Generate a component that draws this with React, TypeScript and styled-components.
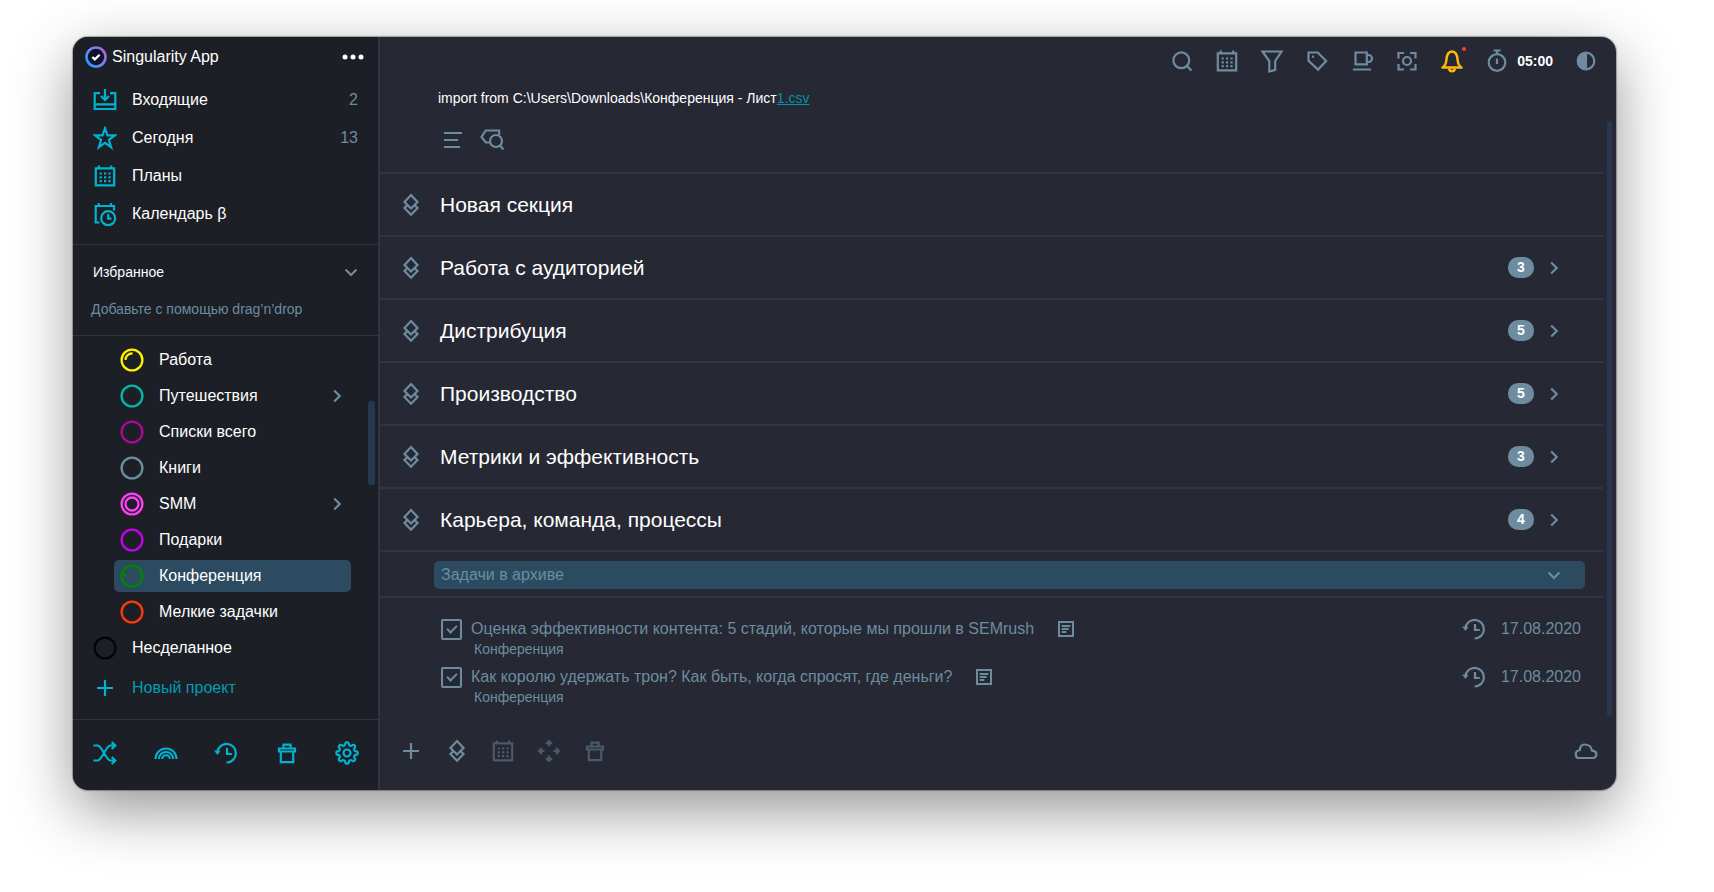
import React, { useState } from 'react';
import styled, { createGlobalStyle, css } from 'styled-components';

const GlobalStyle = createGlobalStyle`
  *, *::before, *::after { box-sizing: border-box; }
  html, body, #root { height: 100%; }
  body {
    margin: 0;
    background: #fff;
    color: #fff;
    font: 16px/20px "Liberation Sans", Arial, sans-serif;
  }
  button { font: inherit; color: inherit; background: none; border: 0; padding: 0; cursor: pointer; text-align: left; }
  ul, h1, h2, p { margin: 0; padding: 0; list-style: none; font-weight: 400; }
  a { color: inherit; }
  svg { flex: none; }
`;

const color = {
  side: '#1c1f26',
  main: '#262833',
  line: '#323541',
  accent: '#00b4d0',
  muted: '#6d8ca0',
  active: '#2c4a60',
  scroll: '#273750',
};

const Desktop = styled.div`
  min-height: 100%;
  display: flex;
  padding: 37px 98px 102px 73px;
`;

const Window = styled.div`
  flex: 1;
  min-width: 0;
  display: flex;
  border-radius: 15px;
  overflow: hidden;
  background: ${color.main};
  box-shadow: 0 0 1px 1px rgba(0, 0, 0, 0.3), 0 20px 60px rgba(0, 0, 0, 0.42);
`;

const Sidebar = styled.aside`
  width: 307px;
  flex: none;
  display: flex;
  flex-direction: column;
  background: ${color.side};
  border-right: 2px solid ${color.line};
`;

const Brand = styled.header`
  display: flex;
  align-items: center;
  gap: 5px;
  height: 40px;
  padding: 0 13px 0 12px;
`;

const BrandName = styled.span`flex: 1;`;

const IconButton = styled.button<{ $tone?: string }>`
  display: flex;
  flex: none;
  align-items: center;
  justify-content: center;
  width: 24px;
  height: 24px;
  color: ${(p) => p.$tone ?? color.muted};
  &:disabled { opacity: 0.5; }
`;

const NavList = styled.ul`
  padding: 4px 0 11px;
  border-bottom: 1px solid ${color.line};
`;

const NavRow = styled.button`
  display: flex;
  align-items: center;
  gap: 15px;
  width: 100%;
  height: 38px;
  padding: 0 20px;
  svg { color: ${color.accent}; }
`;

const NavLabel = styled.span`flex: 1;`;

const NavCount = styled.span`color: ${color.muted};`;

const Favorites = styled.section`
  height: 91px;
  padding: 16px 15px 0 20px;
  font-size: 14px;
  border-bottom: 1px solid ${color.line};
`;

const FavoritesHead = styled.button`
  display: flex;
  align-items: center;
  justify-content: space-between;
  width: 100%;
  height: 22px;
  color: #fff;
  svg { color: ${color.muted}; }
`;

const Hint = styled.p`
  margin: 16px 0 0 -2px;
  color: ${color.muted};
`;

const ProjectArea = styled.div`
  flex: 1;
  min-height: 0;
  display: flex;
  border-bottom: 1px solid ${color.line};
`;

const ProjectList = styled.ul`
  flex: 1;
  padding: 8px 0 0 20px;
`;

const ProjectRow = styled.button<{ $nested?: boolean; $active?: boolean }>`
  display: flex;
  align-items: center;
  gap: 15px;
  height: 32px;
  margin: 0 0 4px;
  width: ${(p) => (p.$nested ? '237px' : '258px')};
  ${(p) => p.$nested && css`margin-left: 21px; padding: 0 2px 0 6px;`}
  border-radius: 5px;
  background: ${(p) => (p.$active ? color.active : 'transparent')};
  svg { color: ${color.muted}; }
`;

const NewProject = styled.button`
  display: flex;
  align-items: center;
  gap: 15px;
  height: 32px;
  margin-top: 8px;
  color: ${color.accent};
  span { color: #009db5; }
`;

const Thumb = styled.span`
  width: 7px;
  height: 84px;
  margin: 65px 3px 0 0;
  border-radius: 3px;
  background: ${color.scroll};
`;

const SideFooter = styled.footer`
  display: flex;
  justify-content: space-between;
  height: 70px;
  padding: 21px 19px 0 20px;
`;

const Main = styled.main`
  flex: 1;
  min-width: 0;
  display: flex;
  flex-direction: column;
`;

const Toolbar = styled.div`
  display: flex;
  justify-content: flex-end;
  align-items: center;
  gap: 21px;
  height: 48px;
  padding-right: 18px;
`;

const Timer = styled.button`
  display: flex;
  align-items: center;
  gap: 8px;
  font-size: 14px;
  font-weight: 700;
  svg { color: ${color.muted}; }
`;

const Bell = styled(IconButton)`
  position: relative;
  &::after {
    content: '';
    position: absolute;
    top: -2px;
    right: -2px;
    width: 4px;
    height: 4px;
    border-radius: 50%;
    background: #f5452c;
  }
`;

const Scroller = styled.div`
  flex: 1;
  min-height: 0;
  display: flex;
`;

const Content = styled.div`
  flex: 1;
  min-width: 0;
`;

const MainTrack = styled.span`
  width: 5px;
  margin: 36px 4px 0;
  border-radius: 2px;
  background: ${color.scroll};
`;

const ProjectHead = styled.header`
  height: 89px;
  padding: 3px 0 0 58px;
  border-bottom: 2px solid ${color.line};
`;

const ProjectTitle = styled.h1`
  font-size: 14px;
  line-height: 20px;
  a { color: #0093ab; }
`;

const ViewTools = styled.div`
  display: flex;
  gap: 15px;
  padding: 20px 0 0 3px;
`;

const SectionRow = styled.button`
  display: flex;
  align-items: center;
  width: 100%;
  height: 63px;
  padding: 0 37px 0 19px;
  border-bottom: 2px solid ${color.line};
  color: ${color.muted};
`;

const SectionTitle = styled.span`
  flex: 1;
  margin-left: 17px;
  color: #fff;
  font-size: 21px;
  line-height: 24px;
`;

const Badge = styled.span`
  width: 26px;
  height: 21px;
  margin-right: 8px;
  border-radius: 10px;
  background: ${color.muted};
  color: #fff;
  font-size: 14px;
  font-weight: 700;
  line-height: 21px;
  text-align: center;
`;

const ArchiveWrap = styled.div`
  padding: 9px 18px 7px 54px;
  border-bottom: 2px solid ${color.line};
`;

const ArchiveBar = styled.button`
  display: flex;
  align-items: center;
  justify-content: space-between;
  width: 100%;
  height: 28px;
  padding: 0 19px 0 7px;
  border-radius: 5px;
  background: ${color.active};
  color: ${color.muted};
`;

const TaskList = styled.ul`padding: 19px 22px 0 61px;`;

const TaskRow = styled.li`
  display: flex;
  height: 48px;
  color: ${color.muted};
`;

const Check = styled.input`
  appearance: none;
  flex: none;
  width: 21px;
  height: 21px;
  margin: 2px 9px 0 0;
  border: 2px solid ${color.muted};
  border-radius: 2px;
  display: grid;
  place-items: center;
  &:checked::before {
    content: '';
    width: 10px;
    height: 6px;
    margin-top: -3px;
    border: solid ${color.muted};
    border-width: 0 0 2px 2px;
    transform: rotate(-45deg);
  }
`;

const TaskBody = styled.div`flex: 1;`;

const TaskLine = styled.div`
  display: flex;
  align-items: center;
  gap: 24px;
  height: 24px;
`;

const TaskProject = styled.a`
  display: block;
  margin-left: 3px;
  font-size: 14px;
  line-height: 16px;
  text-decoration: none;
`;

const TaskDate = styled.div`
  display: flex;
  align-items: center;
  gap: 15px;
  height: 24px;
`;

const MainFooter = styled.footer`
  display: flex;
  gap: 22px;
  height: 74px;
  padding: 23px 18px 0 19px;
`;

const Spacer = styled.span`flex: 1;`;

type IconProps = { children: React.ReactNode; size?: number; width?: number };
const Icon = ({ children, size = 24, width = 2.2 }: IconProps) => (
  <svg width={size} height={size} viewBox="0 0 24 24" fill="none" stroke="currentColor" strokeWidth={width} aria-hidden="true">
    {children}
  </svg>
);

const Logo = () => (
  <svg width="22" height="22" viewBox="0 0 22 22" fill="none" aria-hidden="true">
    <defs>
      <linearGradient id="ring" x1="2" y1="18" x2="20" y2="4" gradientUnits="userSpaceOnUse">
        <stop offset="0" stopColor="#1c9cff" />
        <stop offset="0.5" stopColor="#7a86ea" />
        <stop offset="1" stopColor="#a06ae0" />
      </linearGradient>
    </defs>
    <circle cx="11" cy="11" r="9.5" fill="#11132a" stroke="url(#ring)" strokeWidth="2.6" />
    <path d="M7.3 11l2.5 2.4 4.8-4.6" stroke="#fff" strokeWidth="2.2" />
  </svg>
);

const Dots = () => (
  <Icon><g fill="currentColor" stroke="none"><circle cx="4" cy="12" r="2.5" /><circle cx="12" cy="12" r="2.5" /><circle cx="20" cy="12" r="2.5" /></g></Icon>
);
const Inbox = () => (
  <Icon><path d="M7 5.2H1.7V21h20.6V5.2H17M1.7 16.3h20.6M12 1v10.5M8 8l4 4 4-4" /></Icon>
);
const Star = () => (
  <Icon><path d="M12 2.4l2.5 7h7.3l-5.9 4.4 2.2 7.4-6.1-4.4-6.1 4.4 2.2-7.4-5.9-4.4h7.3z" /></Icon>
);
const Calendar = () => (
  <Icon>
    <path d="M2.8 4.3h18.4v17H2.8zM5.8 1.5v3M18.2 1.5v3" />
    <path d="M6.6 9.5h11M6.6 13.3h11M6.6 17.1h11" strokeDasharray="2.2 2.2" />
  </Icon>
);
const CalendarClock = () => (
  <Icon>
    <path d="M6.5 20.5H2.7V4H21v4.5M5.7 1v3M18 1v3" />
    <circle cx="15.2" cy="16.2" r="7" />
    <path d="M15.2 12v4.6h3.3" />
  </Icon>
);
const ChevronDown = () => <Icon><path d="M6.5 9.5L12 15l5.5-5.5" /></Icon>;
const ChevronRight = () => <Icon><path d="M9.2 6.5l5.5 5.5-5.5 5.5" /></Icon>;
const Plus = () => <Icon><path d="M12 4v16M4 12h16" /></Icon>;
const Shuffle = () => (
  <Icon><path d="M.5 4.5h4.3c4 0 8.400 15 12.400 15H22M.5 19.500h4.3c4 0 8.400-15 12.400-15H22M18.700 1l3.600 3.500L18.700 8M18.700 16l3.600 3.500-3.600 3.500" /></Icon>
);
const Rainbow = () => (
  <Icon width={2}><path d="M1.500 18a10.500 10.500 0 0 1 21 0M4.900 18a7.100 7.100 0 0 1 14.200 0M8.200 18a3.800 3.800 0 0 1 7.600 0" /></Icon>
);
const History = () => (
  <Icon>
    <path d="M3.300 11.500a9.300 9.300 0 1 1 9.300 10M13 7v6h4.800" />
    <path d="M0 9.500l6.500.5-3 4z" fill="currentColor" stroke="none" />
  </Icon>
);
const Trash = () => (
  <Icon><path d="M4 7.500h16v3H4zM5.800 10.500v10.700h12.400V10.500M8.500 7V3.700h7V7" /></Icon>
);

// Outline of an eight-toothed wheel with softened teeth.
const gearPath = Array.from({ length: 144 }, (_, i) => {
  const a = (i / 144) * Math.PI * 2;
  const r = 9.3 + 1.4 * Math.tanh(2 * Math.cos(8 * a));
  return `${i ? 'L' : 'M'}${(12 + r * Math.sin(a)).toFixed(2)} ${(12 - r * Math.cos(a)).toFixed(2)}`;
}).join('') + 'z';

const Gear = () => (
  <Icon>
    <circle cx="12" cy="12" r="3.500" />
    <path strokeLinejoin="round" d={gearPath} />
  </Icon>
);
const Search = () => <Icon><circle cx="11.300" cy="11.300" r="7.900" /><path d="M17 17l4.500 4.500" /></Icon>;
const Funnel = () => <Icon><path d="M2.500 2.500h19L15.200 12v8.800l-5.900 1.700V12z" /></Icon>;
const Tag = () => (
  <Icon><path d="M3.500 3.500h9.300l8.400 8.500-8.200 8.600-9.500-8.800z" /><path d="M7 7.700h2" /></Icon>
);
const Cup = () => (
  <Icon><path d="M5.500 3.500h11.300v11.800H5.500zM17 6h1.500a3 3 0 0 1 0 7H17M3 20.500h18" /></Icon>
);
const Focus = () => (
  <Icon>
    <path d="M3.500 9.500V4H9M15 4h5.500v5.500M20.500 15v5.500H15M9 20.500H3.500V15" />
    <circle cx="12" cy="12" r="4" />
  </Icon>
);
const BellGlyph = () => (
  <Icon width={2.5}>
    <path strokeLinejoin="round" d="M2.500 18.500c2.500-1.500 3.500-3.500 3.800-7 .3-5 1.700-9 5.700-9s5.400 4 5.700 9c.3 3.500 1.300 5.500 3.800 7z" />
    <path d="M9.300 19.500a2.700 2.700 0 0 0 5.400 0" />
  </Icon>
);
const Stopwatch = () => (
  <Icon><circle cx="12" cy="13.500" r="8.300" /><path d="M12 5V1.500M8.500 1.500h7M12 9.500v5.500" /></Icon>
);
const Contrast = () => (
  <Icon><circle cx="12" cy="12" r="8.300" /><path d="M12 4a8 8 0 0 0 0 16z" fill="currentColor" /></Icon>
);
const Lines = () => <Icon><path d="M3 5h18M3 12h14M3 19h16" /></Icon>;
const TagSearch = () => (
  <Icon>
    <path d="M9.500 14.500H5.700L1.500 9l4.200-6.500h13.500v4.200" />
    <circle cx="16" cy="13" r="6" />
    <path d="M20 17.500l3.500 4" />
  </Icon>
);
const Layers = () => (
  <Icon><path d="M12 2l6.500 7-6.500 6.500L5.500 9zM8 12.500L5.500 15l6.500 6.700 6.500-6.700-2.500-2.500" /></Icon>
);
const Move = () => (
  <Icon><path d="M12 3v4.500M9 5l3-3 3 3M12 21v-4.500M9 19l3 3 3-3M3 12h4.500M5 9l-3 3 3 3M21 12h-4.500M19 9l3 3-3 3" /></Icon>
);
const Note = () => (
  <Icon size={16} width={3}><path d="M1.500 1.500h21v21h-21zM5.500 7.500h13M5.500 12h10.500M5.500 16.500h7" /></Icon>
);
const Cloud = () => (
  <Icon><path strokeLinejoin="round" d="M5 19h14a3.600 3.600 0 0 0 .6-7.100c-.8-.2-1.500 0-1.700-.4C17.500 7.500 14 5.500 10.500 5.500c-3 0-4.700 2.500-4.500 5.500-3 .4-4.500 2.500-4.200 4.800C2 17.800 3.500 19 5 19z" /></Icon>
);

type RingKind = 'plain' | 'arc' | 'double' | 'dot';
const Ring = ({ tone, kind = 'plain' }: { tone: string; kind?: RingKind }) => (
  <svg width="24" height="24" viewBox="0 0 24 24" fill="none" stroke={tone} strokeWidth="2.3" aria-hidden="true">
    <circle cx="12" cy="12" r="10.400" />
    {kind === 'arc' && <path d="M5.500 12A6.500 6.500 0 0 1 12.500 5.500" />}
    {kind === 'double' && <circle cx="12" cy="12" r="6.500" />}
    {kind === 'dot' && <circle cx="5" cy="11" r="1.700" fill={tone} stroke="none" />}
  </svg>
);

const navItems = [
  { label: 'Входящие', icon: <Inbox />, count: 2 },
  { label: 'Сегодня', icon: <Star />, count: 13 },
  { label: 'Планы', icon: <Calendar /> },
  { label: 'Календарь β', icon: <CalendarClock /> },
];

const projects: { name: string; tone: string; kind?: RingKind; more?: boolean; root?: boolean }[] = [
  { name: 'Работа', tone: '#fff000', kind: 'arc' },
  { name: 'Путешествия', tone: '#00b8a5', more: true },
  { name: 'Списки всего', tone: '#aa0a94' },
  { name: 'Книги', tone: '#6d8ca0' },
  { name: 'SMM', tone: '#ff40f5', kind: 'double', more: true },
  { name: 'Подарки', tone: '#c500f0' },
  { name: 'Конференция', tone: '#028502', kind: 'dot' },
  { name: 'Мелкие задачки', tone: '#ff3a0a' },
  { name: 'Несделанное', tone: '#050508', root: true },
];

const sections = [
  { title: 'Новая секция' },
  { title: 'Работа с аудиторией', count: 3 },
  { title: 'Дистрибуция', count: 5 },
  { title: 'Производство', count: 5 },
  { title: 'Метрики и эффективность', count: 3 },
  { title: 'Карьера, команда, процессы', count: 4 },
];

const tasks = [
  'Оценка эффективности контента: 5 стадий, которые мы прошли в SEMrush',
  'Как королю удержать трон? Как быть, когда спросят, где деньги?',
];

export default function App() {
  const [active, setActive] = useState('Конференция');
  return (
    <>
      <GlobalStyle />
      <Desktop>
        <Window>
          <Sidebar>
            <Brand>
              <Logo />
              <BrandName>Singularity App</BrandName>
              <IconButton $tone="#fff" aria-label="Меню"><Dots /></IconButton>
            </Brand>
            <NavList>
              {navItems.map((n) => (
                <li key={n.label}>
                  <NavRow>
                    {n.icon}
                    <NavLabel>{n.label}</NavLabel>
                    {n.count && <NavCount>{n.count}</NavCount>}
                  </NavRow>
                </li>
              ))}
            </NavList>
            <Favorites>
              <FavoritesHead>Избранное<ChevronDown /></FavoritesHead>
              <Hint>Добавьте с помощью drag’n’drop</Hint>
            </Favorites>
            <ProjectArea>
              <ProjectList>
                {projects.map((p) => (
                  <li key={p.name}>
                    <ProjectRow $nested={!p.root} $active={p.name === active} onClick={() => setActive(p.name)}>
                      <Ring tone={p.tone} kind={p.kind} />
                      <NavLabel>{p.name}</NavLabel>
                      {p.more && <ChevronRight />}
                    </ProjectRow>
                  </li>
                ))}
                <li><NewProject><Plus /><span>Новый проект</span></NewProject></li>
              </ProjectList>
              <Thumb />
            </ProjectArea>
            <SideFooter>
              <IconButton $tone={color.accent} aria-label="Случайная задача"><Shuffle /></IconButton>
              <IconButton $tone={color.accent} aria-label="Радуга"><Rainbow /></IconButton>
              <IconButton $tone={color.accent} aria-label="История"><History /></IconButton>
              <IconButton $tone={color.accent} aria-label="Корзина"><Trash /></IconButton>
              <IconButton $tone={color.accent} aria-label="Настройки"><Gear /></IconButton>
            </SideFooter>
          </Sidebar>
          <Main>
            <Toolbar>
              <IconButton aria-label="Поиск"><Search /></IconButton>
              <IconButton aria-label="Календарь"><Calendar /></IconButton>
              <IconButton aria-label="Фильтр"><Funnel /></IconButton>
              <IconButton aria-label="Теги"><Tag /></IconButton>
              <IconButton aria-label="Перерыв"><Cup /></IconButton>
              <IconButton aria-label="Фокус"><Focus /></IconButton>
              <Bell $tone="#ffb80a" aria-label="Уведомления"><BellGlyph /></Bell>
              <Timer><Stopwatch />05:00</Timer>
              <IconButton aria-label="Тема"><Contrast /></IconButton>
            </Toolbar>
            <Scroller>
              <Content>
                <ProjectHead>
                  <ProjectTitle>
                    import from C:\Users\Downloads\Конференция - Лист<a href="#csv">1.csv</a>
                  </ProjectTitle>
                  <ViewTools>
                    <IconButton aria-label="Описание"><Lines /></IconButton>
                    <IconButton aria-label="Поиск по тегам"><TagSearch /></IconButton>
                  </ViewTools>
                </ProjectHead>
                {sections.map((s) => (
                  <SectionRow key={s.title}>
                    <Layers />
                    <SectionTitle>{s.title}</SectionTitle>
                    {s.count && <Badge>{s.count}</Badge>}
                    {s.count && <ChevronRight />}
                  </SectionRow>
                ))}
                <ArchiveWrap>
                  <ArchiveBar>Задачи в архиве<ChevronDown /></ArchiveBar>
                </ArchiveWrap>
                <TaskList>
                  {tasks.map((t, i) => (
                    <TaskRow key={t}>
                      <Check type="checkbox" id={`task-${i}`} defaultChecked />
                      <TaskBody>
                        <TaskLine><label htmlFor={`task-${i}`}>{t}</label><Note /></TaskLine>
                        <TaskProject href="#project">Конференция</TaskProject>
                      </TaskBody>
                      <TaskDate><History />17.08.2020</TaskDate>
                    </TaskRow>
                  ))}
                </TaskList>
              </Content>
              <MainTrack />
            </Scroller>
            <MainFooter>
              <IconButton aria-label="Добавить"><Plus /></IconButton>
              <IconButton aria-label="Секция"><Layers /></IconButton>
              <IconButton disabled aria-label="Дата"><Calendar /></IconButton>
              <IconButton disabled aria-label="Переместить"><Move /></IconButton>
              <IconButton disabled aria-label="Удалить"><Trash /></IconButton>
              <Spacer />
              <IconButton aria-label="Синхронизация"><Cloud /></IconButton>
            </MainFooter>
          </Main>
        </Window>
      </Desktop>
    </>
  );
}
